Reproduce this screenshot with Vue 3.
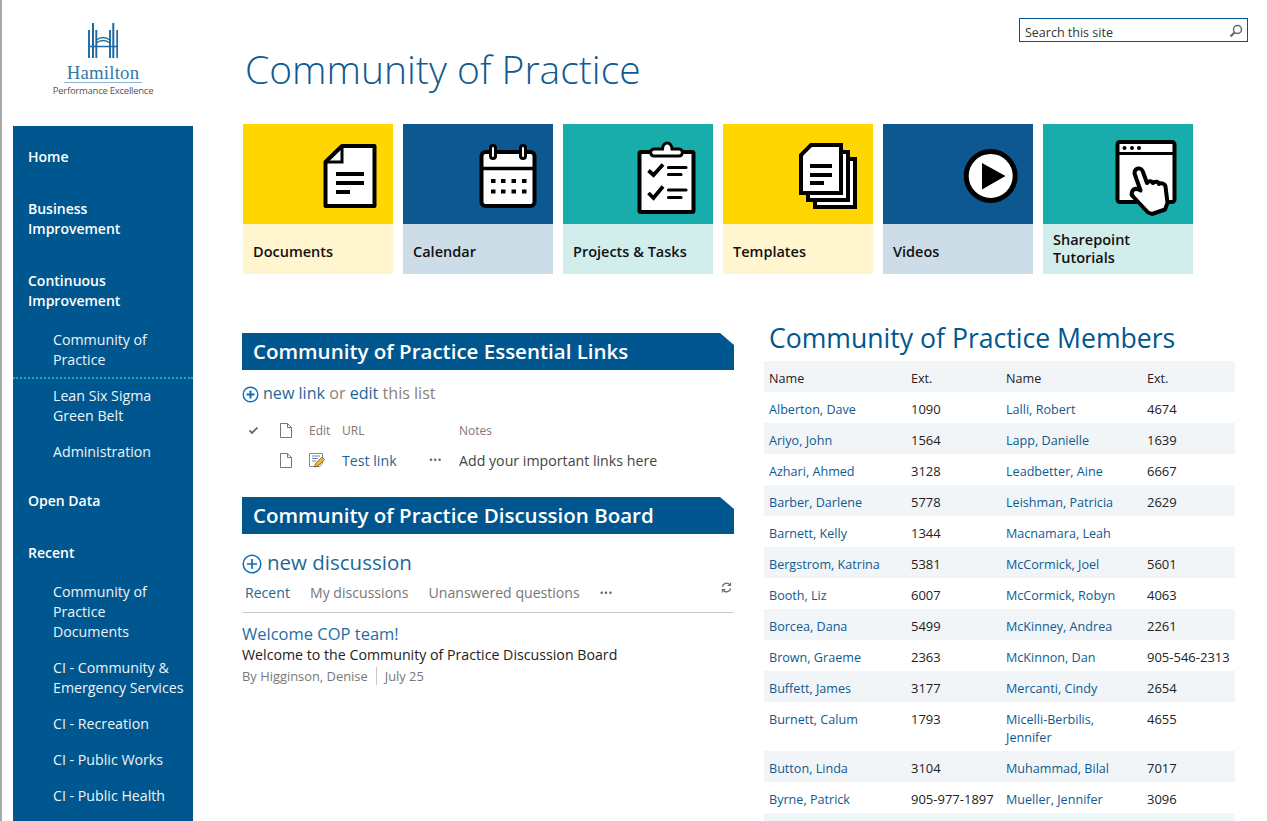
<script setup>
const nav = [
  { label: 'Home' },
  { label: 'Business Improvement' },
  { label: 'Continuous Improvement', children: [
    { label: 'Community of Practice', selected: true },
    { label: 'Lean Six Sigma Green Belt' },
    { label: 'Administration' },
  ] },
  { label: 'Open Data' },
  { label: 'Recent', children: [
    { label: 'Community of\nPractice\nDocuments' },
    { label: 'CI - Community & Emergency Services' },
    { label: 'CI - Recreation' },
    { label: 'CI - Public Works' },
    { label: 'CI - Public Health' },
  ] },
]
const tiles = [
  { label: 'Documents', kind: 'yellow', icon: 'doc' },
  { label: 'Calendar', kind: 'blue', icon: 'cal' },
  { label: 'Projects & Tasks', kind: 'teal', icon: 'clip' },
  { label: 'Templates', kind: 'yellow', icon: 'stack' },
  { label: 'Videos', kind: 'blue', icon: 'play' },
  { label: 'Sharepoint Tutorials', kind: 'teal', icon: 'hand', two: true },
]
const members = [
  ['Alberton, Dave', '1090', 'Lalli, Robert', '4674'],
  ['Ariyo, John', '1564', 'Lapp, Danielle', '1639'],
  ['Azhari, Ahmed', '3128', 'Leadbetter, Aine', '6667'],
  ['Barber, Darlene', '5778', 'Leishman, Patricia', '2629'],
  ['Barnett, Kelly', '1344', 'Macnamara, Leah', ''],
  ['Bergstrom, Katrina', '5381', 'McCormick, Joel', '5601'],
  ['Booth, Liz', '6007', 'McCormick, Robyn', '4063'],
  ['Borcea, Dana', '5499', 'McKinney, Andrea', '2261'],
  ['Brown, Graeme', '2363', 'McKinnon, Dan', '905-546-2313'],
  ['Buffett, James', '3177', 'Mercanti, Cindy', '2654'],
  ['Burnett, Calum', '1793', 'Micelli-Berbilis, Jennifer', '4655'],
  ['Button, Linda', '3104', 'Muhammad, Bilal', '7017'],
  ['Byrne, Patrick', '905-977-1897', 'Mueller, Jennifer', '3096'],
  ['\u00a0', '', '', ''],
]
</script>

<template>
  <div class="page">
    <aside class="side">
      <div class="logo">
        <svg class="logo-mark" viewBox="0 0 30 36" width="30" height="36" fill="none" stroke="#1d6aa0">
          <path stroke-width="1.900" d="M1 7V35M8.300 7V35M22 7V35M29.300 7V35" />
          <path stroke-width="2" d="M5 0V35M25.300 0V35" />
          <path stroke-width="1.300" d="M8.300 17Q15 12 22 17M8.300 20Q15 15 22 20M1 23.500H29.300" />
        </svg>
        <div class="logo-name">Hamilton</div>
        <div class="logo-sub">Performance Excellence</div>
      </div>
      <nav class="nav">
        <div v-for="g in nav" :key="g.label" class="group" :class="{ 'has-sub': g.children }">
          <a class="top">{{ g.label }}</a>
          <div v-if="g.children" class="subs">
            <a v-for="c in g.children" :key="c.label" class="sub" :class="{ selected: c.selected }">{{ c.label }}</a>
          </div>
        </div>
      </nav>
    </aside>

    <main class="main">
      <header class="head">
        <h1 class="title">Community of Practice</h1>
        <div class="search">
          <span>Search this site</span>
          <svg viewBox="0 0 14 14" width="14" height="14" fill="none" stroke="#666">
            <circle cx="8.500" cy="5.500" r="4" stroke-width="1.500" />
            <path stroke-width="2.200" d="M5.500 8.500L1.500 12.500" />
          </svg>
        </div>
      </header>

      <div class="tiles">
        <a v-for="t in tiles" :key="t.label" class="tile" :class="t.kind">
          <svg class="tile-top" viewBox="0 0 150 100" width="150" height="100">
            <g v-if="t.icon === 'doc'">
              <path d="M99 22H131.500V82H82.500V38Z" fill="#fff" stroke="#000" stroke-width="4" stroke-linejoin="round" />
              <path d="M99 22V38H82.500" fill="none" stroke="#000" stroke-width="3" />
              <path d="M93 50H121M93 59H121M93 68H107" stroke="#000" stroke-width="4" />
            </g>
            <g v-else-if="t.icon === 'cal'">
              <rect x="78.500" y="28" width="53" height="54" rx="4" fill="#fff" stroke="#000" stroke-width="4" />
              <path d="M78 44.500H132" stroke="#000" stroke-width="3.500" />
              <rect x="87.500" y="21.500" width="5" height="13" rx="2.500" fill="#fff" stroke="#000" stroke-width="3" />
              <rect x="117.500" y="21.500" width="5" height="13" rx="2.500" fill="#fff" stroke="#000" stroke-width="3" />
              <path d="M88 57H92.500M98 57H102.500M108.500 57H113M119 57H123.500M88 67.500H92.500M98 67.500H102.500M108.500 67.500H113M119 67.500H123.500" stroke="#000" stroke-width="4" />
            </g>
            <g v-else-if="t.icon === 'clip'">
              <rect x="76.500" y="28" width="54" height="60" rx="1.500" fill="#fff" stroke="#000" stroke-width="4" />
              <path d="M91 25H99.500C100 17 108.500 17 109 25H116C120.500 25 120.500 32 116 32H91C86.500 32 86.500 25 91 25Z" fill="#fff" stroke="#000" stroke-width="3" />
              <path d="M85.500 46.500L90.500 51L100 40.500M85.500 69L90.500 74L100 62.500" fill="none" stroke="#000" stroke-width="3.800" />
              <path d="M105.500 43.500H123M105.500 50.500H118M105.500 66H123M105.500 73.500H118" stroke="#000" stroke-width="3.200" stroke-linecap="round" />
            </g>
            <g v-else-if="t.icon === 'stack'">
              <rect x="92" y="35" width="40" height="48" fill="#fff" stroke="#000" stroke-width="4" />
              <rect x="85" y="28" width="40" height="48" fill="#fff" stroke="#000" stroke-width="4" />
              <path d="M88 21H118V69H78V31Z" fill="#fff" stroke="#000" stroke-width="4" />
              <path d="M87 42H109M87 51H109M87 59H101" stroke="#000" stroke-width="4" />
            </g>
            <g v-else-if="t.icon === 'play'">
              <circle cx="107.700" cy="52" r="24.500" fill="#fff" stroke="#000" stroke-width="5" />
              <path d="M99 39L122.500 52L99 65.500Z" fill="#000" />
            </g>
            <g v-else>
              <rect x="74.500" y="18" width="57" height="60" rx="2.500" fill="#fff" stroke="#000" stroke-width="4" />
              <path d="M74 29.500H132" stroke="#000" stroke-width="3" />
              <circle cx="81.500" cy="24" r="2" />
              <circle cx="89" cy="24" r="2" />
              <circle cx="96" cy="24" r="2" />
              <path d="M91.500 49.500C91 43.500 98.500 42.500 100 48L104 59C106 56.500 109 57 110 59C112 57 115.500 57.500 116 60C118 58.500 122 59.500 122.500 62.500L124.500 79L122 85.500L109 90L105 88.500L90.500 73C86.500 69.500 90 63 95.500 65.500L97.500 66.500Z" fill="#fff" stroke="#000" stroke-width="4" stroke-linejoin="round" />
            </g>
          </svg>
          <span class="tile-label" :class="{ two: t.two }">{{ t.label }}</span>
        </a>
      </div>

      <div class="cols">
        <section class="left">
          <h2 class="band">Community of Practice Essential Links</h2>
          <div class="add small">
            <svg viewBox="0 0 17 17" width="17" height="17" fill="none" stroke="#0f6cbd">
              <circle cx="8.500" cy="8.500" r="7.300" stroke-width="1.400" />
              <path stroke-width="2" d="M4.500 8.500H12.500M8.500 4.500V12.500" />
            </svg>
            <span><a class="link">new link</a> <span class="muted">or</span> <a class="link">edit</a> <span class="muted">this list</span></span>
          </div>
          <div class="lrow lhead">
            <span class="c-check">
              <svg viewBox="0 0 9 7" width="9" height="7" fill="none" stroke="#666" stroke-width="1.800"><path d="M.5 3.500L3 6L8.500 .5" /></svg>
            </span>
            <span class="c-doc">
              <svg viewBox="0 0 12 15" width="12" height="15" fill="none" stroke="#777"><path d="M.5.500H7.500L11.500 4.500V14.500H.5ZM7.500.500V4.500H11.500" /></svg>
            </span>
            <span class="c-edit">Edit</span>
            <span class="c-url">URL</span>
            <span class="c-dots"></span>
            <span class="c-notes">Notes</span>
          </div>
          <div class="lrow lbody">
            <span class="c-check"></span>
            <span class="c-doc">
              <svg viewBox="0 0 12 15" width="12" height="15" fill="none" stroke="#777"><path d="M.5.500H7.500L11.500 4.500V14.500H.5ZM7.500.500V4.500H11.500" /></svg>
            </span>
            <span class="c-edit">
              <svg viewBox="0 0 16 16" width="16" height="16">
                <path d="M.5 1.500H13.500V11L11 14.500H.5Z" fill="#fff" stroke="#7d8ea3" />
                <path d="M3 4H11M3 6.500H9M3 9H7" stroke="#6f84a6" />
                <path d="M5.500 15L6.500 11.500L13 5L15.500 7.500L9 14Z" fill="#f0b429" stroke="#6b4f1c" stroke-width=".7" />
              </svg>
            </span>
            <a class="c-url link">Test link</a>
            <span class="c-dots">•••</span>
            <span class="c-notes dark">Add your important links here</span>
          </div>

          <h2 class="band second">Community of Practice Discussion Board</h2>
          <div class="add big">
            <svg viewBox="0 0 20 20" width="20" height="20" fill="none" stroke="#0f6cbd">
              <circle cx="10" cy="10" r="8.800" stroke-width="1.500" />
              <path stroke-width="1.700" d="M5 10H15M10 5V15" />
            </svg>
            <a class="link">new discussion</a>
          </div>
          <div class="tabs">
            <a class="tab active">Recent</a>
            <a class="tab">My discussions</a>
            <a class="tab">Unanswered questions</a>
            <span class="tab-dots">•••</span>
            <svg class="refresh" viewBox="0 0 12 12" width="11" height="11" fill="none" stroke="#666" stroke-width="1.400">
              <path d="M1.500 5A4.500 4.500 0 0 1 9.500 3M10.500 7A4.500 4.500 0 0 1 2.500 9" />
              <path d="M10.500.500V3.800H7.200M1.500 11.500V8.200H4.800" stroke-width="1.100" />
            </svg>
          </div>
          <div class="post">
            <a class="post-title">Welcome COP team!</a>
            <p class="post-body">Welcome to the Community of Practice Discussion Board</p>
            <div class="post-meta"><span>By Higginson, Denise</span><span class="sep">July 25</span></div>
          </div>
        </section>

        <section class="right">
          <h2 class="members-title">Community of Practice Members</h2>
          <table class="members">
            <colgroup>
              <col class="w1" /><col class="w2" /><col class="w3" /><col class="w4" />
            </colgroup>
            <thead>
              <tr><th>Name</th><th>Ext.</th><th>Name</th><th>Ext.</th></tr>
            </thead>
            <tbody>
              <tr v-for="(m, i) in members" :key="i">
                <td class="nm">{{ m[0] }}</td>
                <td class="ext">{{ m[1] }}</td>
                <td class="nm">{{ m[2] }}</td>
                <td class="ext">{{ m[3] }}</td>
              </tr>
            </tbody>
          </table>
        </section>
      </div>
    </main>
  </div>
</template>

<style>
html, body { margin: 0; height: 821px; overflow: hidden; background: #fff; }
</style>

<style scoped>
.page {
  display: flex;
  height: 821px;
  overflow: hidden;
  border-left: 2px solid #a8a8a8;
  box-sizing: border-box;
  padding-left: 11px;
  font-family: "Open Sans", "Noto Sans", sans-serif;
  font-size: 13px;
  color: #444;
}
a { text-decoration: none; }
h1, h2, p { margin: 0; }

.side { width: 180px; flex: none; display: flex; flex-direction: column; }
.logo { height: 126px; flex: none; box-sizing: border-box; padding-top: 23px; display: flex; flex-direction: column; align-items: center; }
.logo-mark { display: block; flex: none; }
.logo-name {
  font-family: "Liberation Serif", serif;
  font-size: 18.800px;
  line-height: 19px;
  margin-top: 4px;
  color: #3577a6;
  border-bottom: 1px solid #8ab4d2;
  padding: 0 3px;
  letter-spacing: .2px;
}
.logo-sub { font-size: 9.500px; line-height: 14px; margin-top: 1px; color: #555; letter-spacing: -.25px; }

.nav { flex: 1; background: #00578f; padding-top: 21px; color: #fff; }
.group { padding-bottom: 32px; }
.group.has-sub { padding-bottom: 0; }
.top { display: block; padding: 0 40px 0 15px; font-size: 14px; line-height: 20px; font-weight: 600; color: #fff; }
.subs { display: flex; flex-direction: column; gap: 16px; padding: 19px 0 29px; }
.sub { display: block; padding: 0 8px 0 40px; font-size: 14.200px; line-height: 20px; color: #eef4f8; white-space: pre-line; }
.sub.selected { padding-bottom: 7px; border-bottom: 2px dotted #18acab; margin-bottom: -9px; padding-right: 40px; }

.main { flex: 1; min-width: 0; padding-left: 49px; display: flex; flex-direction: column; }
.head { height: 124px; flex: none; display: flex; justify-content: space-between; align-items: flex-start; padding-left: 3px; }
.title {
  font-size: 39px;
  line-height: 50px;
  margin-top: 44px;
  font-weight: 300;
  color: #0f5a90;
  white-space: nowrap;
}
.search {
  margin: 18px 19px 0 0;
  width: 229px;
  height: 24px;
  box-sizing: border-box;
  border: 1px solid #00578f;
  display: flex;
  align-items: center;
  justify-content: space-between;
  padding: 2px 4px 0 5px;
  font-size: 12.500px;
  color: #333;
}
.search span { margin-top: 3px; }

.tiles { display: flex; flex: none; gap: 10px; padding-left: 1px; }
.tile { width: 150px; height: 150px; display: flex; flex-direction: column; }
.tile-top { display: block; flex: none; }
.tile.yellow .tile-top { background: #ffd600; }
.tile.yellow { background: #fff5cf; }
.tile.blue .tile-top { background: #0d5890; }
.tile.blue { background: #cddde8; }
.tile.teal .tile-top { background: #18acab; }
.tile.teal { background: #d2eeec; }
.tile-label {
  padding: 19px 10px 0;
  font-size: 14.500px;
  line-height: 18px;
  font-weight: 600;
  color: #111;
}
.tile-label.two { padding-top: 7px; }

.cols { display: flex; flex: none; }
.left { width: 492px; flex: none; padding-top: 59px; }
.right { width: 471px; margin-left: 30px; flex: none; padding-top: 46px; }

.band {
  height: 37px;
  line-height: 37px;
  padding-left: 11px;
  background: #00578f;
  clip-path: polygon(0 0, calc(100% - 14px) 0, 100% 12px, 100% 100%, 0 100%);
  color: #fff;
  font-size: 20.500px;
  font-weight: 600;
  white-space: nowrap;
}
.band.second { margin-top: 22px; }

.add { display: flex; align-items: center; }
.add.small { height: 46px; gap: 4px; font-size: 16.100px; }
.add.small svg { margin-top: 2px; }
.add.big { height: 55px; gap: 5px; font-size: 20.500px; }
.add.big svg { margin-top: 4px; }
.link { color: #1f6797; }
.muted { color: #8a817a; }

.lrow { display: flex; align-items: center; padding-left: 5px; }
.lhead { height: 29px; color: #80766f; font-size: 12px; }
.lbody { height: 30px; font-size: 14.200px; }
.c-check { width: 33px; display: flex; padding-left: 2px; box-sizing: border-box; }
.c-doc { width: 29px; display: flex; }
.c-edit { width: 33px; display: flex; }
.c-url { width: 87px; }
.c-dots { width: 30px; font-size: 10px; letter-spacing: .6px; color: #555; }
.c-notes { flex: 1; }
.dark { color: #444; }

.tabs {
  position: relative;
  display: flex;
  align-items: center;
  height: 24px;
  margin-top: -9px;
  padding: 0 0 8px 3px;
  gap: 20px;
  border-bottom: 1px solid #c8c8c8;
  font-size: 14.100px;
  color: #777;
}
.tab.active { color: #1f6797; }
.tab-dots { font-size: 10px; letter-spacing: .6px; color: #555; margin-top: 2px; }
.refresh { position: absolute; right: 2px; top: 2px; }

.post { padding-top: 10px; }
.post-title { display: block; font-size: 16.500px; line-height: 22px; color: #1f6ea3; }
.post-body { font-size: 14.200px; line-height: 20px; color: #222; }
.post-meta { display: flex; font-size: 12.900px; line-height: 18px; color: #777; margin-top: 2px; }
.sep { border-left: 1px solid #c8c8c8; margin-left: 8px; padding-left: 8px; }

.members-title {
  padding-left: 5px;
  font-size: 26.600px;
  line-height: 36px;
  font-weight: 400;
  color: #00578f;
  white-space: nowrap;
}
.members { width: 471px; table-layout: fixed; border-collapse: collapse; font-size: 12.600px; line-height: 18px; color: #222; margin-top: 5px; }
.w1 { width: 142px; } .w2 { width: 95px; } .w3 { width: 141px; } .w4 { width: 93px; }
.members th, .members td { padding: 9px 5px 4px; text-align: left; font-weight: 400; vertical-align: top; }
.members th { background: #f2f5f8; }
.members tbody tr:nth-child(even) td { background: #f2f5f8; }
.nm { color: #0f5a90; }
.members td.ext { font-size: 13px; padding: 8px 5px 5px; }
</style>
